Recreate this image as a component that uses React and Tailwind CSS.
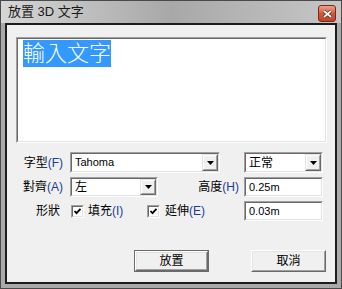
import React from 'react';

// classic sunken field: outer + inner bevel
const Sunken = ({ className = '', children }) => (
  <div className={`border border-t-[#a0a0a0] border-l-[#a0a0a0] border-b-white border-r-white ${className}`}>
    <div className="w-full h-full border border-t-[#696969] border-l-[#696969] border-b-[#e3e3e3] border-r-[#e3e3e3] bg-white flex items-center">
      {children}
    </div>
  </div>
);

const ArrowButton = () => (
  <div className="ml-auto h-full w-[16px] border border-t-[#e3e3e3] border-l-[#e3e3e3] border-b-[#696969] border-r-[#696969] bg-[#f0f0f0]">
    <div className="w-full h-full border border-t-white border-l-white border-b-[#a0a0a0] border-r-[#a0a0a0] flex items-center justify-center">
      <svg width="7" height="4" viewBox="0 0 7 4">
        <polygon points="0,0 7,0 3.5,4" fill="#000" />
      </svg>
    </div>
  </div>
);

const Combo = ({ value, className = '' }) => (
  <Sunken className={className}>
    <span className="pl-[3px] leading-none">{value}</span>
    <ArrowButton />
  </Sunken>
);

const Check = () => (
  <Sunken className="w-[13px] h-[13px] shrink-0">
    <svg width="9" height="9" viewBox="0 0 9 9">
      <polyline points="1.5,4 3.5,6.2 7.5,1.8" fill="none" stroke="#000" strokeWidth="1.8" />
    </svg>
  </Sunken>
);

const Label = ({ text, keyChar, className = '' }) => (
  <span className={className}>
    {text}
    <span className="text-[#1a3a9c]">({keyChar})</span>
  </span>
);

const Button = ({ children, isDefault }) => (
  <div className={`w-[75px] h-[22px] ${isDefault ? 'border border-[#6a6a6a]' : ''}`}>
    <div className="w-full h-full border border-t-white border-l-white border-b-[#696969] border-r-[#696969]">
      <div className="w-full h-full border border-t-[#e3e3e3] border-l-[#e3e3e3] border-b-[#a0a0a0] border-r-[#a0a0a0] flex items-center justify-center">
        {children}
      </div>
    </div>
  </div>
);

export default function App() {
  return (
    <div className="w-[342px] h-[289px] border border-[#4a4a4a] bg-[#a9a9a9] flex flex-col text-[12px] text-black font-['Liberation_Sans','Noto_Sans_CJK_TC',sans-serif]">
      {/* Title bar */}
      <div className="h-[22px] flex bg-linear-to-r from-[#d6d6d6] via-[#a8a8a8] to-[#c6c6c6]">
        <span className="pl-[7px] pt-[4px] text-[#1a1a1a] text-[13px] leading-none">放置 3D 文字</span>
        <div className="ml-auto mr-[5px] mt-[4px] w-[18px] h-[17px] rounded-[3px] border border-[#7a2a1a] bg-linear-to-b from-[#e9a28c] via-[#d2583a] to-[#c0442a] flex items-center justify-center">
          <svg width="9" height="8" viewBox="0 0 9 8">
            <path d="M1 1 L8 7 M8 1 L1 7" stroke="#5a1a10" strokeWidth="3" />
            <path d="M1 1 L8 7 M8 1 L1 7" stroke="#fff" strokeWidth="1.8" />
          </svg>
        </div>
      </div>

      {/* Client area */}
      <div className="flex-1 mx-[4px] mb-[4px] border-2 border-[#1c1c1c] bg-[#f0f0f0] flex flex-col">
        <Sunken className="ml-[9px] mt-[12px] w-[311px] h-[106px]">
          <div className="self-start pl-[5px] pt-[1px]">
            <span className="bg-[#3399ff] text-white text-[22px] leading-[27px] font-light inline-block">輸入文字</span>
          </div>
        </Sunken>

        {/* Font row */}
        <div className="mt-[9px] flex items-center h-[21px]">
          <Label text="字型" keyChar="F" className="w-[56px] text-right" />
          <Combo value="Tahoma" className="ml-[7px] w-[150px] h-[21px] text-[11px]" />
          <Combo value="正常" className="ml-[24px] w-[79px] h-[21px]" />
        </div>

        {/* Align row */}
        <div className="mt-[4px] flex items-center h-[20px]">
          <Label text="對齊" keyChar="A" className="w-[56px] text-right" />
          <Combo value="左" className="ml-[7px] w-[88px] h-[20px]" />
          <Label text="高度" keyChar="H" className="flex-1 text-right pr-[5px]" />
          <Sunken className="w-[79px] h-[20px] mr-[12px]">
            <span className="pl-[3px] text-[11px]">0.25m</span>
          </Sunken>
        </div>

        {/* Shape row */}
        <div className="mt-[4px] flex items-center h-[20px]">
          <span className="w-[56px] text-right pr-[3px]">形狀</span>
          <div className="ml-[8px] w-[76px] flex items-center">
            <Check />
            <Label text="填充" keyChar="I" className="ml-[4px]" />
          </div>
          <div className="flex items-center">
            <Check />
            <Label text="延伸" keyChar="E" className="ml-[5px]" />
          </div>
          <Sunken className="ml-auto w-[79px] h-[20px] mr-[12px]">
            <span className="pl-[3px] text-[11px]">0.03m</span>
          </Sunken>
        </div>

        {/* Buttons */}
        <div className="mt-[29px] flex justify-end gap-[42px] mr-[9px]">
          <Button isDefault>放置</Button>
          <Button>取消</Button>
        </div>
      </div>
    </div>
  );
}
